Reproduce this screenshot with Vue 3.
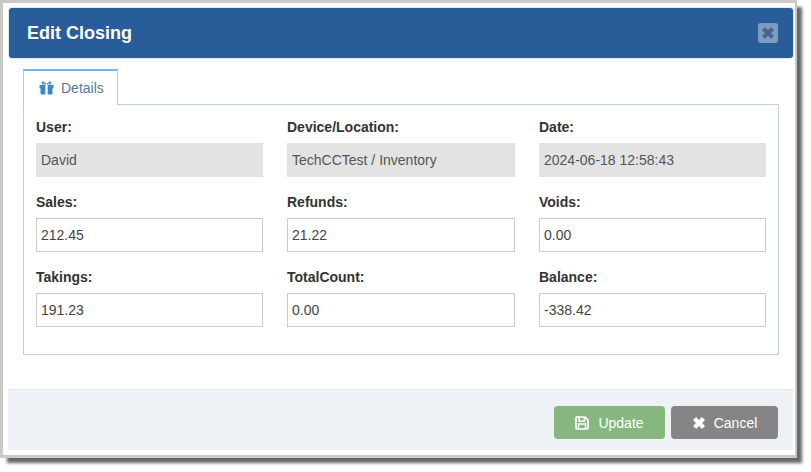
<script setup>
const fields = [
  { label: 'User:', value: 'David', ro: true },
  { label: 'Device/Location:', value: 'TechCCTest / Inventory', ro: true },
  { label: 'Date:', value: '2024-06-18 12:58:43', ro: true },
  { label: 'Sales:', value: '212.45' },
  { label: 'Refunds:', value: '21.22' },
  { label: 'Voids:', value: '0.00' },
  { label: 'Takings:', value: '191.23' },
  { label: 'TotalCount:', value: '0.00' },
  { label: 'Balance:', value: '-338.42' },
]
</script>

<template>
  <div class="page">
    <div class="frame">
      <div class="modal">
        <header class="head">
          <h4 class="title">Edit Closing</h4>
          <button class="close" type="button" aria-label="Close">
            <svg width="14" height="14" viewBox="0 0 11 11"><path d="M1.500 3.200 3.200 1.500 5.500 3.800 7.800 1.500 9.500 3.200 7.200 5.500 9.500 7.800 7.800 9.500 5.500 7.200 3.200 9.500 1.500 7.800 3.800 5.500Z" fill="#48668f" stroke="#48668f" stroke-linejoin="round"/></svg>
          </button>
        </header>
        <div class="body">
          <div class="tabs">
            <div class="tab">
              <svg class="gift" width="15" height="14" viewBox="0 0 15 14">
                <path d="M4.600 3.600C3.200 3.600 2.500 2.800 2.500 2 2.500 1 3.300.5 4 .5 5.400.5 6.600 2 7.500 3.400 8.400 2 9.600.5 11 .5 11.700.5 12.500 1 12.500 2 12.500 2.800 11.800 3.600 10.400 3.600Z M4.500 1.700C4 1.700 3.800 1.900 3.800 2.100 3.800 2.400 4.100 2.600 4.600 2.600H6.200C5.600 2.100 5 1.700 4.500 1.700Z M10.500 1.700C10 1.700 9.400 2.100 8.800 2.600H10.400C10.900 2.600 11.200 2.400 11.200 2.100 11.200 1.900 11 1.700 10.500 1.700Z" fill="#3b87c9" fill-rule="evenodd"/>
                <path d="M.5 4H6.300V7.300H.5ZM8.700 4H14.500V7.300H8.700ZM1.500 7.300H6.300V13.500H2.500A1 1 0 0 1 1.500 12.500ZM8.700 7.300H13.500V12.500A1 1 0 0 1 12.500 13.500H8.700Z" fill="#3b87c9"/>
              </svg>
              <span>Details</span>
            </div>
          </div>
          <div class="panel">
            <div class="grid">
              <div v-for="f in fields" :key="f.label" class="field">
                <label class="label">{{ f.label }}</label>
                <div class="input" :class="{ ro: f.ro }">{{ f.value }}</div>
              </div>
            </div>
          </div>
        </div>
        <footer class="foot">
          <button class="btn update" type="button">
            <svg width="14" height="14" viewBox="0 0 14 14"><path d="M1.500 1H10L13 4V12A1 1 0 0 1 12 13H2A1 1 0 0 1 1 12V1.500Z M4 1.500V5.200H9.500V1.500 M3.500 13V8H10.500V13" fill="none" stroke="currentColor" stroke-width="1.600"/></svg>
            <span>Update</span>
          </button>
          <button class="btn cancel" type="button">
            <svg width="14" height="14" viewBox="0 0 11 11"><path d="M1.500 3.200 3.200 1.500 5.500 3.800 7.800 1.500 9.500 3.200 7.200 5.500 9.500 7.800 7.800 9.500 5.500 7.200 3.200 9.500 1.500 7.800 3.800 5.500Z" fill="currentColor" stroke="currentColor" stroke-linejoin="round"/></svg>
            <span>Cancel</span>
          </button>
        </footer>
      </div>
    </div>
  </div>
</template>

<style>
html, body { margin: 0; background: #fff; }
</style>

<style scoped>
.page {
  width: 811px;
  height: 472px;
  overflow: hidden;
  background: #fff;
  font-family: "Liberation Sans", Arial, sans-serif;
  font-size: 14px;
  color: #333;
}
.frame {
  width: 797px;
  height: 458px;
  box-sizing: border-box;
  border: 3px solid #c9c9c9;
  border-right-width: 2px;
  background: #fff;
  box-shadow: 6px 6px 3px -1px #666;
  padding: 5px 2px 5px 5px;
}
.modal { display: flex; flex-direction: column; height: 100%; }
.head {
  height: 50px;
  flex: none;
  box-sizing: border-box;
  display: flex;
  align-items: center;
  justify-content: space-between;
  padding: 0 15px 0 18px;
  margin-left: 1px;
  background: #285d99;
  border-radius: 3px;
  box-shadow: 0 0 0 1px #e4e8ee;
}
.title { margin: 0; font-size: 18px; font-weight: 700; color: #fff; }
.close {
  width: 20px;
  height: 20px;
  padding: 0;
  border: 0;
  border-radius: 3px;
  background: #7e9bc0;
  display: flex;
  align-items: center;
  justify-content: center;
}
.body { flex: 1; padding: 11px 14px 0 15px; }
.tabs { display: flex; height: 35px; }
.tab {
  box-sizing: border-box;
  width: 95px;
  height: 36px;
  display: flex;
  align-items: center;
  gap: 7px;
  padding-left: 15px;
  background: #fff;
  border: 1px solid #b7cbdf;
  border-top: 2px solid #7db1dc;
  border-bottom: 0;
  color: #5c7a96;
  position: relative;
  z-index: 1;
}
.panel {
  box-sizing: border-box;
  height: 251px;
  border: 1px solid #c0d0e0;
  padding: 12px 12px 0;
}
.grid {
  display: grid;
  grid-template-columns: 227px 228px 227px;
  column-gap: 24px;
  row-gap: 15px;
}
.field { display: flex; flex-direction: column; }
.label { height: 26px; line-height: 20px; font-weight: 700; color: #333; }
.input {
  box-sizing: border-box;
  height: 34px;
  line-height: 32px;
  padding: 0 4px;
  border: 1px solid #ccc;
  color: #444;
}
.input.ro { background: #e3e3e3; border-color: #e3e3e3; color: #555; }
.foot {
  margin-top: auto;
  height: 61px;
  flex: none;
  box-sizing: border-box;
  display: flex;
  justify-content: flex-end;
  align-items: flex-start;
  gap: 6px;
  padding: 16px 15px 0 0;
  background: #eef1f6;
  border-top: 1px solid #e3e7ec;
}
.btn {
  height: 33px;
  border: 0;
  border-radius: 4px;
  color: #fff;
  font: 14px "Liberation Sans", Arial, sans-serif;
  display: flex;
  align-items: center;
  justify-content: center;
  gap: 9px;
  padding: 0;
}
.update { width: 111px; background: #86b77f; }
.cancel { width: 107px; background: #858585; gap: 8px; }
</style>
